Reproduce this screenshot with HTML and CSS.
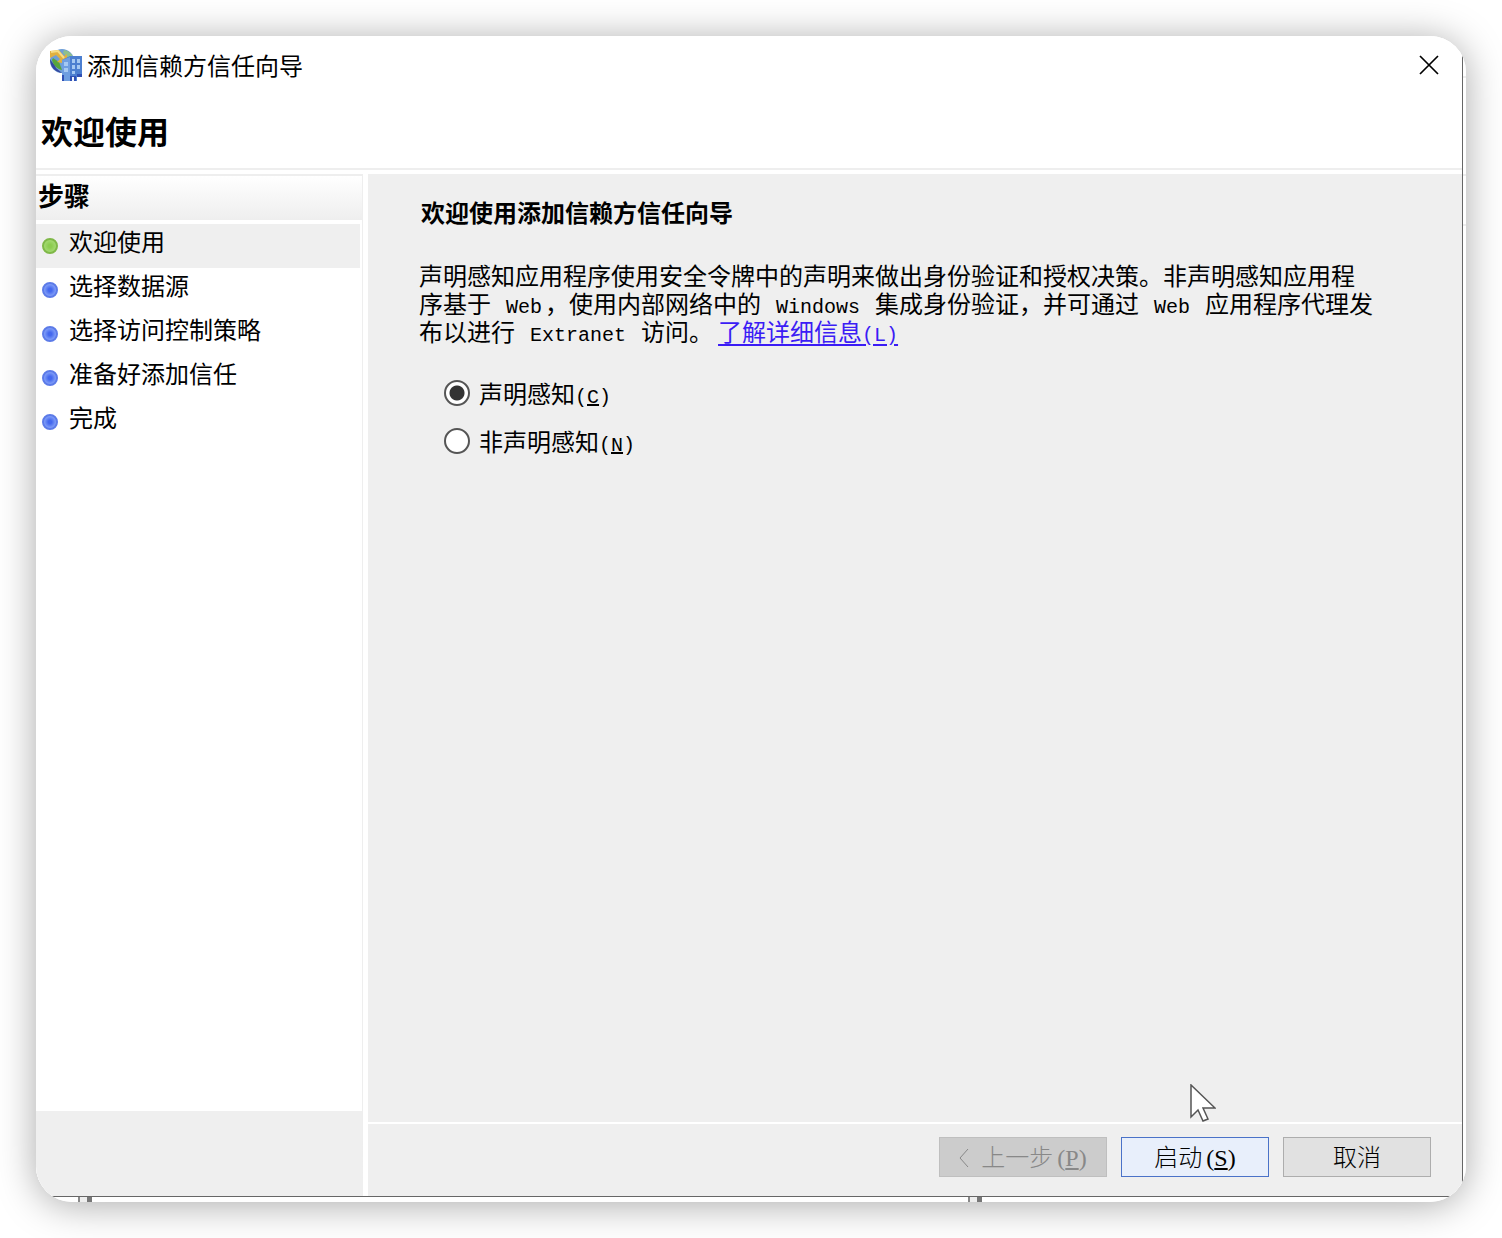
FILE: index.html
```html
<!DOCTYPE html>
<html lang="zh-CN">
    <head>
        <meta charset="UTF-8" />
        <meta name="viewport" content="width=device-width, initial-scale=1.0" />
        <title>添加信赖方信任向导</title>
        <link rel="stylesheet" href="styles.css">
    </head>
    <body>
        <div class="window">
            <div class="dialog">
                <header class="header">
                    <div class="title-bar">
                        <svg class="app-icon" viewBox="0 0 32 32" aria-hidden="true">
                            <circle cx="12" cy="12" r="12" fill="#6f9fd6" />
                            <path d="M0 10C2 14 5 15 6 19L12 24C5 23 0 18 0 10Z" fill="#3448a0" />
                            <path d="M3 9L9 13L12 21C7 20 3 16 2 11Z" fill="#58a53c" />
                            <path d="M14 1C19 2 22 5 23 8L17 8L13 4Z" fill="#8fc08c" />
                            <path d="M0 2L9 1L14 7L17 5V15L7 13L10 10L6 6L0 9Z" fill="#e0b040" />
                            <path d="M1 3L8 2L14 9" fill="none" stroke="#f5dc86" stroke-width="2" />
                            <path d="M12 11L20 7H32V28H27V32H12Z" fill="#4c7fd0" />
                            <path d="M12 11L20 8V32H12Z" fill="#6f9ee0" />
                            <path d="M14 13h4v4h-4zM14 19h4v4h-4zM22 10h3v4h-3zM27 10h3v4h-3zM22 16h3v4h-3zM27 16h3v4h-3zM22 22h3v3h-3z" fill="#a5c8f2" />
                            <path d="M20 27h6v5h-6zM27 25h5v3h-5zM12 26h2v6h-2z" fill="#3050b4" />
                            <path d="M22 28h2v4h-2z" fill="#eef4fc" />
                        </svg>
                        <span class="title">添加信赖方信任向导</span>
                        <button class="close" type="button" aria-label="关闭">
                            <svg viewBox="0 0 20 20" aria-hidden="true">
                                <path d="M1 1L19 19M19 1L1 19" fill="none" stroke="#000" stroke-width="1.7" />
                            </svg>
                        </button>
                    </div>
                    <h1>欢迎使用</h1>
                </header>

                <div class="content">
                    <nav class="sidebar">
                        <h2>步骤</h2>
                        <ol class="steps">
                            <li class="active">欢迎使用</li>
                            <li>选择数据源</li>
                            <li>选择访问控制策略</li>
                            <li>准备好添加信任</li>
                            <li>完成</li>
                        </ol>
                    </nav>

                    <div class="main">
                        <div class="page">
                            <h3>欢迎使用添加信赖方信任向导</h3>
                            <p>
                                声明感知应用程序使用安全令牌中的声明来做出身份验证和授权决策。非声明感知应用程<br />序基于<span class="en"> Web</span>，使用内部网络中的<span class="en"> Windows </span>集成身份验证，并可通过<span class="en"> Web </span>应用程序代理发<br />布以进行<span class="en"> Extranet </span>访问。<a href="#">了解详细信息<span class="key">(L)</span></a>
                            </p>
                            <div class="options">
                                <label><input type="radio" name="aware" checked />声明感知<span class="key">(<u>C</u>)</span></label>
                                <label><input type="radio" name="aware" />非声明感知<span class="key">(<u>N</u>)</span></label>
                            </div>
                        </div>
                        <footer class="footer">
                            <button class="back" type="button" disabled>
                                <svg class="chevron" viewBox="0 0 10 20" aria-hidden="true">
                                    <path d="M9 1L1 10L9 19" fill="none" stroke="currentColor" />
                                </svg>
                                <span>上一步<span class="accel">(<u>P</u>)</span></span>
                            </button>
                            <button class="start" type="button">启动<span class="accel">(<u>S</u>)</span></button>
                            <button type="button">取消</button>
                        </footer>
                    </div>
                </div>
            </div>

            <!-- edges of the console behind the dialog -->
            <span class="splitter splitter-left"></span>
            <span class="splitter splitter-right"></span>

            <svg class="cursor" viewBox="0 0 26 38" aria-hidden="true">
                <path d="M1 1V33L8 26L13 37L18 35L13 24H25Z" fill="#fff" stroke="#555" stroke-width="1.5" />
            </svg>
        </div>
    </body>
</html>
```
FILE: styles.css
```css
*,
*::before {
    margin: 0;
    padding: 0;
    box-sizing: border-box;
}
body {
    height: 100vh;
    padding: 36px;
    background: #fff;
    color: #000;
    font-family: "Noto Sans CJK SC", sans-serif;
    font-size: 24px;
    line-height: 28px;
}
button {
    font: inherit;
}

.window {
    position: relative;
    height: 100%;
    padding: 0 3px 5px 0;
    background: linear-gradient(#fff 40px, #eee 40px, #eee 42px, #fff 42px, #fff 138px, #eee 138px, #eee 140px, #fff 140px, #fff 188px, #eee 188px, #eee 190px, #fff 190px);
    border-radius: 36px;
    box-shadow: 0 3px 38px rgba(0, 0, 0, 0.34);
    overflow: hidden;
}
.dialog {
    display: flex;
    flex-direction: column;
    height: 100%;
    background: #fff;
    border-right: 1px solid #666;
    border-bottom: 1px solid #666;
}

.header {
    height: 134px;
    border-bottom: 2px solid #eee;
}
.title-bar {
    display: flex;
    align-items: center;
    gap: 5px;
    height: 58px;
    padding: 0 13px 0 14px;
}
.app-icon {
    width: 32px;
    height: 32px;
}
.title {
    flex: 1;
}
.close {
    width: 40px;
    height: 40px;
    border: none;
    background: none;
}
.close svg {
    display: block;
    width: 20px;
    height: 20px;
    margin: 0 auto;
}
.header h1 {
    padding: 18px 5px;
    font-size: 32px;
    line-height: 36px;
}

.content {
    flex: 1;
    display: flex;
    gap: 5px;
    padding-top: 4px;
}
.sidebar {
    display: flex;
    flex-direction: column;
    width: 327px;
    border-top: 2px solid #eee;
    border-right: 1px solid #eee;
    border-bottom: 85px solid #efefef;
}
.sidebar h2 {
    height: 44px;
    padding: 0 2px;
    background: linear-gradient(#fff, #eee);
    font-size: 26px;
    line-height: 38px;
}
.steps {
    flex: 1;
    padding: 4px 2px 0 0;
    list-style: none;
}
.steps li {
    display: flex;
    align-items: center;
    gap: 11px;
    height: 44px;
    padding: 0 6px 10px;
}
.steps li::before {
    content: "";
    width: 16px;
    height: 16px;
    margin-top: 10px;
    border: 2px solid #5c7be8;
    border-radius: 50%;
    background: radial-gradient(#4468ee 20%, #8eaafa 80%);
}
.steps .active {
    background: #efefef;
}
.steps .active::before {
    border-color: #7fb848;
    background: radial-gradient(#8ccc50 20%, #a8dc78 80%);
}

.main {
    flex: 1;
    display: flex;
    flex-direction: column;
    background: #efefef;
}
.page {
    flex: 1;
    padding: 24px 51px;
}
.page h3 {
    margin-bottom: 35px;
    padding-left: 2px;
    font-size: 24px;
}
.en,
.key {
    font-family: "Liberation Mono", monospace;
    font-size: 20px;
    line-height: 16px;
}
.en {
    margin: 0 3px;
    white-space: pre;
}
.page a {
    margin-left: 5px;
    color: #3b1cf5;
    text-underline-offset: 3px;
}
.options {
    display: flex;
    flex-direction: column;
    align-items: flex-start;
    gap: 20px;
    margin-top: 34px;
    padding-left: 25px;
}
.options label {
    display: flex;
    align-items: baseline;
}
.options input {
    appearance: none;
    align-self: center;
    width: 26px;
    height: 26px;
    margin-right: 9px;
    border: 2px solid #555;
    border-radius: 50%;
    background: #fff;
}
.options input:checked {
    background: radial-gradient(circle, #333 7px, #fff 8px);
}

.footer {
    display: flex;
    justify-content: flex-end;
    gap: 14px;
    height: 74px;
    padding: 13px 31px 0;
    border-top: 2px solid #fff;
}
.footer button {
    width: 148px;
    height: 40px;
    padding-top: 2px;
    border: 1px solid #adadad;
    background: #e1e1e1;
    color: #000;
    font-family: "Liberation Serif", "Noto Sans CJK SC", serif;
    font-weight: 300;
}
.footer .back {
    display: flex;
    align-items: center;
    justify-content: center;
    width: 168px;
    border-color: #bfbfbf;
    background: #ccc;
    color: #888;
}
.footer .start {
    border-color: #4a72c8;
    background: #e8effb;
}
.accel {
    margin-left: 4px;
}
.chevron {
    width: 10px;
    height: 20px;
    margin-right: 12px;
}

.splitter {
    position: absolute;
    bottom: 0;
    width: 14px;
    height: 5px;
    border-left: 2px solid #888;
    border-right: 5px solid #777;
    background: #eee;
}
.splitter-left {
    left: 42px;
}
.splitter-right {
    left: 932px;
}
.cursor {
    position: absolute;
    right: 250px;
    bottom: 80px;
    width: 26px;
    height: 38px;
}
```
